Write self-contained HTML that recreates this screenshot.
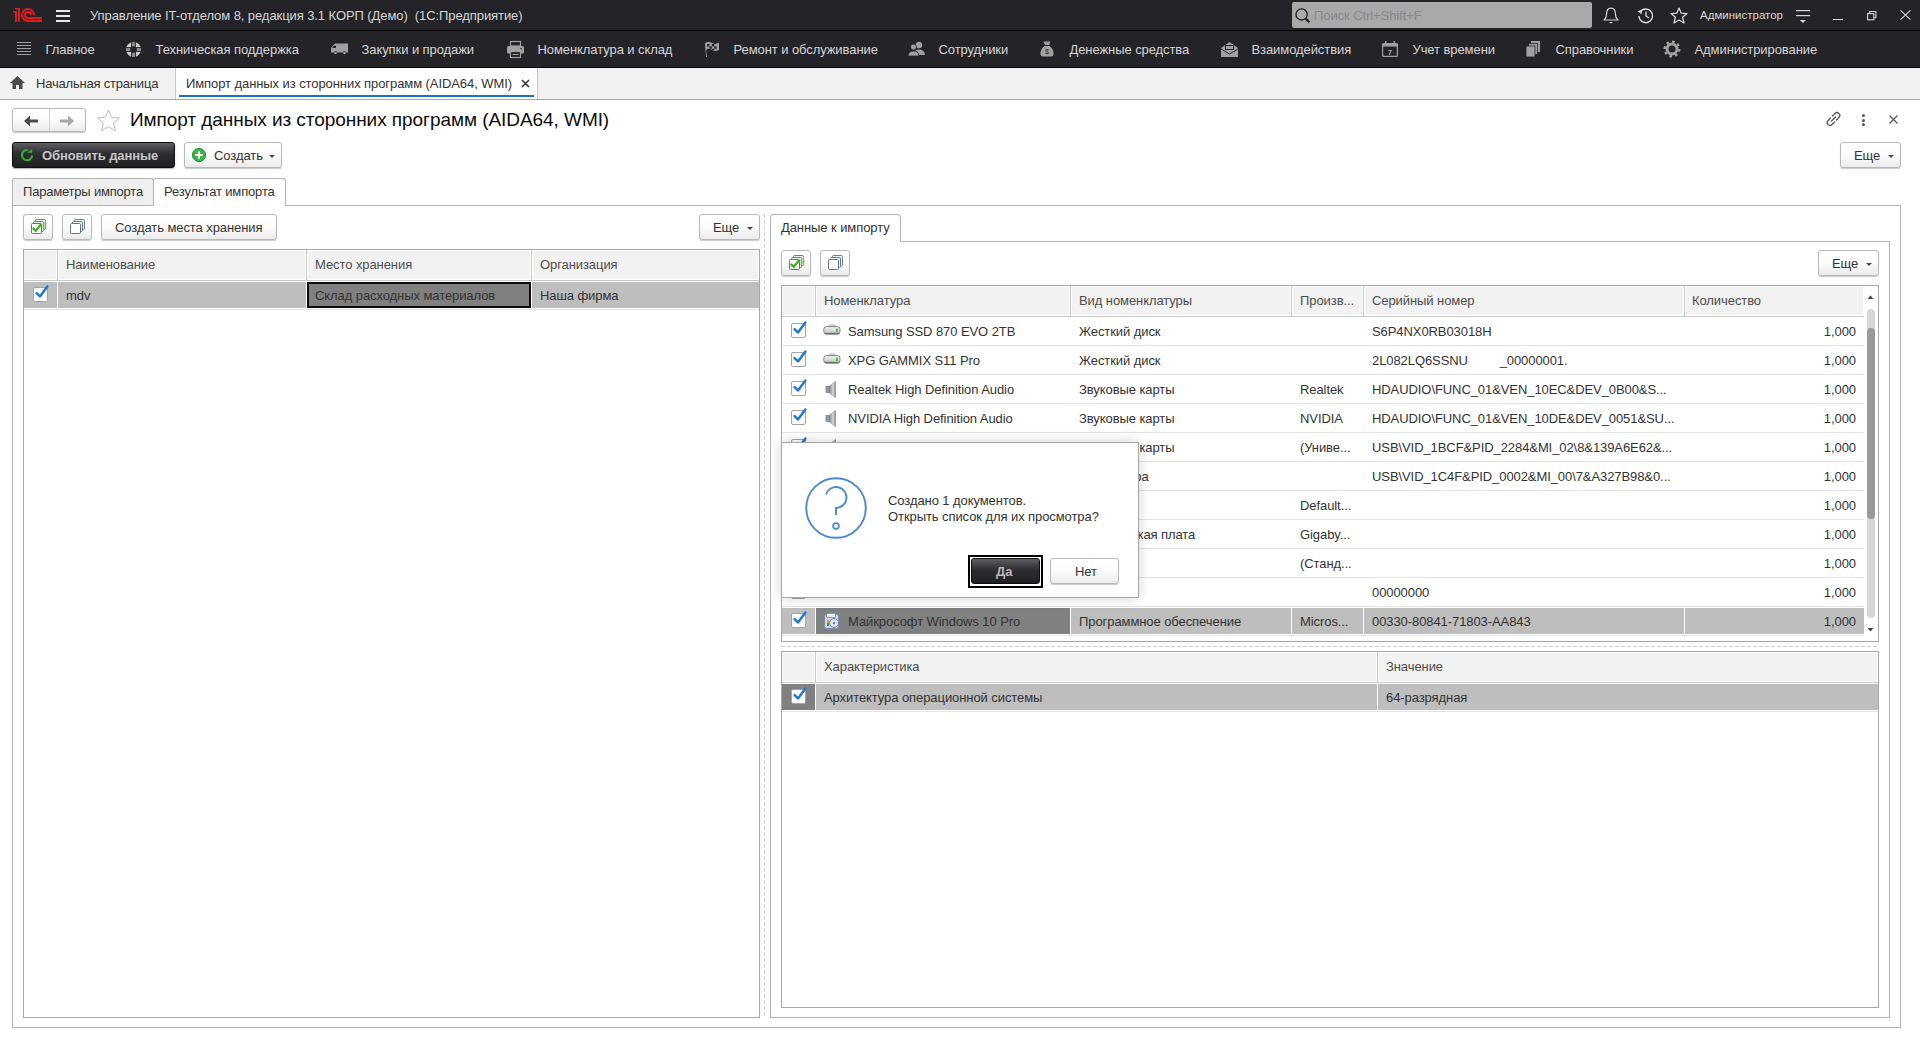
<!DOCTYPE html>
<html><head><meta charset="utf-8"><style>
*{margin:0;padding:0;box-sizing:border-box}
html,body{width:1920px;height:1040px;overflow:hidden;background:#fff;font-family:"Liberation Sans",sans-serif;font-size:13px;color:#333}
.a{position:absolute}
.t{position:absolute;white-space:pre}
svg{position:absolute;overflow:visible}
</style></head><body>
<svg style="left:0;top:0" width="0" height="0"><defs><linearGradient id="hddg" x1="0" y1="0" x2="0" y2="1"><stop offset="0" stop-color="#f6f6f6"/><stop offset="0.6" stop-color="#d4d4d4"/><stop offset="1" stop-color="#a8a8a8"/></linearGradient></defs></svg>
<div class="a" style="left:0px;top:0px;width:1920px;height:30px;background:#232328"></div>
<div class="a" style="left:0px;top:30px;width:1920px;height:1px;background:#050505"></div>
<div class="a" style="left:0px;top:31px;width:1920px;height:36px;background:#232328"></div>
<div class="a" style="left:0px;top:67px;width:1920px;height:1px;background:#050505"></div>
<div class="a" style="left:0px;top:68px;width:1920px;height:31px;background:#f2f2f2"></div>
<div class="a" style="left:0px;top:99px;width:1920px;height:1px;background:#a9a9a9"></div>
<svg style="left:0;top:0" width="50" height="30" viewBox="0 0 50 30">
<g fill="#e01b22">
<rect x="13" y="11" width="3.9" height="1.7"/><rect x="15" y="11" width="1.9" height="11"/>
<rect x="15" y="8" width="5" height="1.5"/><rect x="18" y="8" width="2" height="14"/>
</g>
<g fill="none" stroke="#e01b22" stroke-width="2">
<path d="M34 15 A6 6 0 1 0 28 21 H42"/>
<path d="M31 15 A3 3 0 1 0 28 18 H42"/>
</g></svg>
<div class="a" style="left:56px;top:10px;width:14px;height:1.5px;background:#e8e8e8"></div>
<div class="a" style="left:56px;top:15px;width:14px;height:1.5px;background:#e8e8e8"></div>
<div class="a" style="left:56px;top:20px;width:14px;height:1.5px;background:#e8e8e8"></div>
<div class="t" style="left:90px;top:8.00px;font-size:13px;line-height:15px;letter-spacing:-0.08px;color:#d6d6d6;">Управление IT-отделом 8, редакция 3.1 КОРП (Демо)  (1С:Предприятие)</div>
<div class="a" style="left:1292px;top:2px;width:300px;height:26px;background:#a9a9a9;border-radius:2px"></div>
<svg style="left:1294px;top:7px" width="18" height="18" viewBox="0 0 18 18"><circle cx="7.6" cy="7.4" r="5.6" fill="none" stroke="#1e1e1e" stroke-width="1.3"/><path d="M11.6 11.6 L15.3 15.3" stroke="#1e1e1e" stroke-width="2.3"/></svg>
<div class="t" style="left:1314px;top:8.00px;font-size:13px;line-height:15px;letter-spacing:-0.08px;color:#858890;">Поиск Ctrl+Shift+F</div>
<svg style="left:1603px;top:7px" width="16" height="17" viewBox="0 0 16 17"><path d="M8 1.2 C4.8 1.2 3.6 4 3.6 7 C3.6 10 2.8 11.5 1 13 H15 C13.2 11.5 12.4 10 12.4 7 C12.4 4 11.2 1.2 8 1.2 Z" fill="none" stroke="#d8d8d8" stroke-width="1.2" stroke-linejoin="round"/><path d="M6 15 H10 L8 16.6 Z" fill="#d8d8d8"/></svg>
<svg style="left:1637px;top:7px" width="17" height="17" viewBox="0 0 17 17"><path d="M3.2 5 A6.8 6.8 0 1 1 2 9" fill="none" stroke="#d8d8d8" stroke-width="1.4"/><path d="M0.5 4 L4.8 3 L4.5 7.5 Z" fill="#d8d8d8"/><path d="M9 4.5 V9 L12 11" fill="none" stroke="#d8d8d8" stroke-width="1.4"/></svg>
<svg style="left:1670px;top:7px" width="18" height="17" viewBox="0 0 18 17"><path d="M9 1 L11.3 6.2 L17 6.6 L12.6 10.3 L14 16 L9 13 L4 16 L5.4 10.3 L1 6.6 L6.7 6.2 Z" fill="none" stroke="#d8d8d8" stroke-width="1.3" stroke-linejoin="round"/></svg>
<div class="t" style="left:1700px;top:8.52px;font-size:11.5px;line-height:13px;color:#d6d6d6;">Администратор</div>
<svg style="left:1795px;top:9px" width="16" height="15" viewBox="0 0 16 15"><rect x="1" y="1" width="14.2" height="1.2" fill="#d8d8d8"/><rect x="1" y="6" width="14.2" height="1.2" fill="#d8d8d8"/><path d="M4.8 11 H11 L7.9 14 Z" fill="#d8d8d8"/></svg>
<div class="a" style="left:1833px;top:19px;width:10px;height:1px;background:#d8d8d8"></div>
<svg style="left:1866px;top:10px" width="11" height="11" viewBox="0 0 11 11"><rect x="1.6" y="3.6" width="6.2" height="6.2" fill="none" stroke="#d8d8d8" stroke-width="1.1"/><path d="M3.7 3.6 V1.5 H9.9 V7.7 H7.8" fill="none" stroke="#d8d8d8" stroke-width="1.1"/></svg>
<svg style="left:1900px;top:10px" width="11" height="10" viewBox="0 0 11 10"><path d="M0.5 0.3 L10.5 9.7 M10.5 0.3 L0.5 9.7" stroke="#d8d8d8" stroke-width="1.1"/></svg>
<div class="t" style="left:45.5px;top:42.00px;font-size:13px;line-height:15px;letter-spacing:-0.08px;color:#d6d6d6;">Главное</div>
<div class="t" style="left:155.5px;top:42.00px;font-size:13px;line-height:15px;letter-spacing:-0.08px;color:#d6d6d6;">Техническая поддержка</div>
<div class="t" style="left:361.5px;top:42.00px;font-size:13px;line-height:15px;letter-spacing:-0.08px;color:#d6d6d6;">Закупки и продажи</div>
<div class="t" style="left:537.5px;top:42.00px;font-size:13px;line-height:15px;letter-spacing:-0.08px;color:#d6d6d6;">Номенклатура и склад</div>
<div class="t" style="left:733.5px;top:42.00px;font-size:13px;line-height:15px;letter-spacing:-0.08px;color:#d6d6d6;">Ремонт и обслуживание</div>
<div class="t" style="left:938.5px;top:42.00px;font-size:13px;line-height:15px;letter-spacing:-0.08px;color:#d6d6d6;">Сотрудники</div>
<div class="t" style="left:1069.5px;top:42.00px;font-size:13px;line-height:15px;letter-spacing:-0.08px;color:#d6d6d6;">Денежные средства</div>
<div class="t" style="left:1251.5px;top:42.00px;font-size:13px;line-height:15px;letter-spacing:-0.08px;color:#d6d6d6;">Взаимодействия</div>
<div class="t" style="left:1412.5px;top:42.00px;font-size:13px;line-height:15px;letter-spacing:-0.08px;color:#d6d6d6;">Учет времени</div>
<div class="t" style="left:1555.5px;top:42.00px;font-size:13px;line-height:15px;letter-spacing:-0.08px;color:#d6d6d6;">Справочники</div>
<div class="t" style="left:1694.5px;top:42.00px;font-size:13px;line-height:15px;letter-spacing:-0.08px;color:#d6d6d6;">Администрирование</div>
<svg style="left:17px;top:42px" width="14" height="14" viewBox="0 0 14 14"><rect x="0" y="0" width="14" height="1" fill="#a0a0a0"/><rect x="0" y="3" width="14" height="1" fill="#a0a0a0"/><rect x="0" y="6" width="14" height="1" fill="#a0a0a0"/><rect x="0" y="9" width="14" height="1" fill="#a0a0a0"/><rect x="0" y="12" width="14" height="1" fill="#a0a0a0"/></svg>
<svg style="left:125px;top:41px" width="17" height="17" viewBox="0 0 17 17"><defs><clipPath id="lbc"><circle cx="8.5" cy="8.5" r="7.6"/></clipPath></defs><g clip-path="url(#lbc)"><g fill="#cdcdcd"><rect x="0" y="0" width="6.1" height="6.1"/><rect x="10.9" y="0" width="6.1" height="6.1"/><rect x="0" y="10.9" width="6.1" height="6.1"/><rect x="10.9" y="10.9" width="6.1" height="6.1"/></g><g fill="#8e8e8e"><rect x="7" y="0" width="3" height="5.3"/><rect x="7" y="11.8" width="3" height="5.2"/><rect x="0" y="7" width="5.2" height="3"/><rect x="11.8" y="7" width="5.2" height="3"/></g></g></svg>
<svg style="left:331px;top:43px" width="17" height="12" viewBox="0 0 17 12"><path d="M4 0.5 H17 V9.5 H15 A1.5 1.5 0 0 0 12 9.5 H6 A1.5 1.5 0 0 0 3 9.5 H0 V5 L2 2.5 Z" fill="#a0a0a0"/><path d="M1.2 5 L2.8 2.8 H5 V5 Z" fill="#232328"/><circle cx="4.5" cy="10" r="1.3" fill="#a0a0a0"/><circle cx="13.5" cy="10" r="1.3" fill="#a0a0a0"/></svg>
<svg style="left:507px;top:41px" width="17" height="17" viewBox="0 0 17 17"><rect x="3.5" y="0.5" width="10" height="4.5" fill="none" stroke="#a0a0a0" stroke-width="1.2"/><rect x="0" y="5" width="17" height="7.5" rx="1.5" fill="#a0a0a0"/><circle cx="14" cy="7.5" r="0.8" fill="#232328"/><rect x="3.5" y="10.5" width="10" height="6" fill="#232328" stroke="#a0a0a0" stroke-width="1.2"/><rect x="5.5" y="13" width="6" height="1" fill="#a0a0a0"/></svg>
<svg style="left:704px;top:41px" width="15" height="16" viewBox="0 0 15 16"><path d="M1 2 Q5 0 8 2 T15 1.5 V9 Q11 11 8 9 T2 9.5 L3 16 H2 Z" fill="#a0a0a0"/><g fill="#232328"><rect x="3" y="3" width="2.4" height="2.4"/><rect x="7.8" y="3" width="2.4" height="2.4"/><rect x="5.4" y="5.4" width="2.4" height="2.4"/><rect x="10.2" y="5.4" width="2.4" height="2.4"/><rect x="3" y="7.8" width="2.4" height="1.5"/><rect x="7.8" y="7.8" width="2.4" height="1.5"/></g></svg>
<svg style="left:908px;top:41px" width="17" height="15" viewBox="0 0 17 15"><circle cx="11" cy="4" r="3.2" fill="#a0a0a0"/><path d="M5.5 14 Q6 8.5 11 8.5 Q16.5 8.5 17 14 Z" fill="#a0a0a0"/><circle cx="5.5" cy="6" r="3" fill="#a0a0a0" stroke="#232328" stroke-width="0.8"/><path d="M0 15 Q0.5 10 5.5 10 Q10.5 10 11 15 Z" fill="#a0a0a0" stroke="#232328" stroke-width="0.8"/></svg>
<svg style="left:1040px;top:41px" width="14" height="16" viewBox="0 0 14 16"><path d="M3.5 0.5 H10.5 L9 4 H5 Z" fill="#a0a0a0"/><path d="M4.5 5 H9.5 Q14 8 13.5 13.5 Q13 15.5 11 15.5 H3 Q1 15.5 0.5 13.5 Q0 8 4.5 5 Z" fill="#a0a0a0"/><text x="7" y="13" font-size="7" text-anchor="middle" fill="#232328" font-family="Liberation Sans">$</text></svg>
<svg style="left:1221px;top:41px" width="17" height="16" viewBox="0 0 17 16"><path d="M0 7 L8.5 1 L17 7 V16 H0 Z" fill="#a0a0a0"/><rect x="4" y="4" width="9" height="5" fill="#232328"/><rect x="5" y="5" width="7" height="3" fill="#a0a0a0"/><path d="M0 8 L8.5 13 L17 8" fill="none" stroke="#232328" stroke-width="1"/></svg>
<svg style="left:1382px;top:41px" width="16" height="16" viewBox="0 0 16 16"><rect x="0.6" y="2.6" width="14.8" height="12.8" rx="1" fill="none" stroke="#a0a0a0" stroke-width="1.2"/><rect x="0.6" y="2.6" width="14.8" height="3" fill="#a0a0a0"/><rect x="3" y="0" width="1.5" height="4" fill="#a0a0a0"/><rect x="11.5" y="0" width="1.5" height="4" fill="#a0a0a0"/><text x="8" y="14" font-size="8" font-weight="bold" text-anchor="middle" fill="#a0a0a0" font-family="Liberation Sans">7</text></svg>
<svg style="left:1526px;top:41px" width="14" height="16" viewBox="0 0 14 16"><rect x="5" y="0" width="9" height="11" fill="#a0a0a0"/><rect x="2.5" y="2.5" width="9" height="11" fill="#a0a0a0" stroke="#232328" stroke-width="0.8"/><rect x="0" y="5" width="9" height="11" fill="#a0a0a0" stroke="#232328" stroke-width="0.8"/></svg>
<svg style="left:1664px;top:41px" width="16" height="16" viewBox="0 0 16 16"><circle cx="8" cy="8" r="5" fill="none" stroke="#a0a0a0" stroke-width="3"/><circle cx="8" cy="8" r="7.3" fill="none" stroke="#a0a0a0" stroke-width="2.4" stroke-dasharray="2.6 3.1"/></svg>
<svg style="left:10px;top:76px" width="15" height="13" viewBox="0 0 15 13"><path d="M7.5 0 L15 7 H12.5 V13 H9 V9 H6 V13 H2.5 V7 H0 Z" fill="#4a4a4a"/></svg>
<div class="t" style="left:36px;top:76.00px;font-size:13px;line-height:15px;color:#333;letter-spacing:-0.2px">Начальная страница</div>
<div class="a" style="left:175px;top:68px;width:1px;height:31px;background:#c8c8c8"></div>
<div class="a" style="left:176px;top:68px;width:361px;height:31px;background:#fff"></div>
<div class="a" style="left:537px;top:68px;width:1px;height:31px;background:#c8c8c8"></div>
<div class="t" style="left:186px;top:76.00px;font-size:13px;line-height:15px;letter-spacing:-0.08px;color:#333;">Импорт данных из сторонних программ (AIDA64, WMI)</div>
<div class="a" style="left:179px;top:95px;width:355px;height:2px;background:#1a73c8"></div>
<svg style="left:521px;top:79px" width="9" height="9" viewBox="0 0 9 9"><path d="M1 1 L8 8 M8 1 L1 8" stroke="#333" stroke-width="1.5"/></svg>
<div class="a" style="left:12px;top:108px;width:74px;height:24px;border:1px solid #b9b9b9;border-radius:3px;background:linear-gradient(#ffffff 0%,#fdfdfd 45%,#ebebeb 100%);box-shadow:0 1px 1px rgba(0,0,0,.22);"></div>
<div class="a" style="left:49px;top:109px;width:1px;height:22px;background:#d2d2d2"></div>
<svg style="left:24px;top:115px" width="14" height="12" viewBox="0 0 14 12"><path d="M0 6 L6 0.5 V4.5 H14 V7.5 H6 V11.5 Z" fill="#4a4a4a"/></svg>
<svg style="left:60px;top:115px" width="14" height="12" viewBox="0 0 14 12"><path d="M14 6 L8 0.5 V4.5 H0 V7.5 H8 V11.5 Z" fill="#a8a8a8"/></svg>
<svg style="left:96px;top:109px" width="25" height="23" viewBox="0 0 25 23"><path d="M12.5 1 L15.6 8.3 L23.5 8.9 L17.5 14 L19.4 21.8 L12.5 17.6 L5.6 21.8 L7.5 14 L1.5 8.9 L9.4 8.3 Z" fill="none" stroke="#b8bec6" stroke-width="1" stroke-linejoin="miter"/></svg>
<div class="t" style="left:130px;top:109.42px;font-size:19px;line-height:22px;color:#0d0d0d;letter-spacing:-0.06px">Импорт данных из сторонних программ (AIDA64, WMI)</div>
<svg style="left:1825px;top:111px" width="17" height="16" viewBox="0 0 17 16"><g fill="none" stroke="#555" stroke-width="1.3" stroke-linecap="round"><path d="M7.5 5 L10 2.5 A2.6 2.6 0 0 1 14 6.3 L11.5 9"/><path d="M9.5 11 L7 13.5 A2.6 2.6 0 0 1 3 9.7 L5.5 7"/><path d="M6.5 10 L10.5 6"/></g></svg>
<div class="a" style="left:1861.5px;top:114px;width:3px;height:3px;border-radius:50%;background:#555"></div>
<div class="a" style="left:1861.5px;top:118.5px;width:3px;height:3px;border-radius:50%;background:#555"></div>
<div class="a" style="left:1861.5px;top:123px;width:3px;height:3px;border-radius:50%;background:#555"></div>
<svg style="left:1889px;top:115px" width="9" height="9" viewBox="0 0 9 9"><path d="M0.5 0.5 L8.5 8.5 M8.5 0.5 L0.5 8.5" stroke="#555" stroke-width="1.2"/></svg>
<div class="a" style="left:12px;top:142px;width:163px;height:26px;border-radius:3px;background:linear-gradient(#5e5e62 0%,#2e2e32 45%,#202024 100%);border:1px solid #0e0e10;box-shadow:0 1px 1px rgba(0,0,0,.3)"></div>
<svg style="left:20px;top:148px" width="14" height="14" viewBox="0 0 14 14"><path d="M12.1 7.6 A5.1 5.1 0 1 1 7.6 2.1" fill="none" stroke="#32b02a" stroke-width="2.1"/><path d="M7.2 4.6 L12.2 0.9 L12.2 4.9 Z" fill="#32b02a"/></svg>
<div class="t" style="left:42px;top:148.00px;font-size:13px;line-height:15px;letter-spacing:-0.08px;color:#c6c6c6;font-weight:bold;">Обновить данные</div>
<div class="a" style="left:184px;top:142px;width:98px;height:26px;border:1px solid #b9b9b9;border-radius:3px;background:linear-gradient(#ffffff 0%,#fdfdfd 45%,#ebebeb 100%);box-shadow:0 1px 1px rgba(0,0,0,.22);"></div>
<svg style="left:191px;top:147px" width="16" height="16" viewBox="0 0 16 16"><circle cx="8" cy="8" r="6.6" fill="#3eb24c" stroke="#22973a" stroke-width="1"/><path d="M8 4.3 V11.7 M4.3 8 H11.7" stroke="#fff" stroke-width="2"/></svg>
<div class="t" style="left:214px;top:148.00px;font-size:13px;line-height:15px;letter-spacing:-0.08px;color:#333;">Создать</div>
<svg style="left:269px;top:155px" width="6" height="3" viewBox="0 0 6 3"><path d="M0 0 H6 L3 3 Z" fill="#4a4a4a"/></svg>
<div class="a" style="left:1840px;top:142px;width:61px;height:26px;border:1px solid #b9b9b9;border-radius:3px;background:linear-gradient(#ffffff 0%,#fdfdfd 45%,#ebebeb 100%);box-shadow:0 1px 1px rgba(0,0,0,.22);"></div>
<div class="t" style="left:1854px;top:148.00px;font-size:13px;line-height:15px;letter-spacing:-0.08px;color:#333;">Еще</div>
<svg style="left:1888px;top:155px" width="6" height="3" viewBox="0 0 6 3"><path d="M0 0 H6 L3 3 Z" fill="#4a4a4a"/></svg>
<div class="a" style="left:12px;top:205px;width:1889px;height:823px;border:1px solid #b4b4b4"></div>
<div class="a" style="left:12px;top:178px;width:142px;height:27px;border:1px solid #b4b4b4;border-bottom:none;border-radius:3px 3px 0 0;background:#efefef"></div>
<div class="a" style="left:153px;top:178px;width:133px;height:28px;border:1px solid #b4b4b4;border-bottom:none;border-radius:3px 3px 0 0;background:#fff"></div>
<div class="t" style="left:23px;top:184.00px;font-size:13px;line-height:15px;color:#333;letter-spacing:-0.2px">Параметры импорта</div>
<div class="t" style="left:164px;top:184.00px;font-size:13px;line-height:15px;color:#333;letter-spacing:-0.15px">Результат импорта</div>
<div class="a" style="left:23px;top:214px;width:30px;height:26px;border:1px solid #b9b9b9;border-radius:3px;background:linear-gradient(#ffffff 0%,#fdfdfd 45%,#ebebeb 100%);box-shadow:0 1px 1px rgba(0,0,0,.22);"></div>
<svg style="left:30px;top:219px" width="17" height="16" viewBox="0 0 17 16"><rect x="5.5" y="0.5" width="10" height="10" rx="1" fill="#eef4ee" stroke="#55708a" stroke-width="0.9"/><path d="M15.5 2 V9.5" stroke="#6cc050" stroke-width="1.5"/><rect x="3.5" y="2.5" width="10" height="10" rx="1" fill="#eef4ee" stroke="#55708a" stroke-width="0.9"/><path d="M13.5 4 V11.5" stroke="#6cc050" stroke-width="1.5"/><rect x="1.5" y="4.5" width="10" height="10" rx="1" fill="#fff" stroke="#4a6888" stroke-width="0.9"/><path d="M2.8 8.8 L5.8 11.8 L11.2 5.3" fill="none" stroke="#45ad2a" stroke-width="2.4"/></svg>
<div class="a" style="left:62px;top:214px;width:30px;height:26px;border:1px solid #b9b9b9;border-radius:3px;background:linear-gradient(#ffffff 0%,#fdfdfd 45%,#ebebeb 100%);box-shadow:0 1px 1px rgba(0,0,0,.22);"></div>
<svg style="left:69px;top:219px" width="17" height="16" viewBox="0 0 17 16"><rect x="5.5" y="0.5" width="10" height="10" rx="1" fill="#f2f5f8" stroke="#55708a" stroke-width="0.9"/><rect x="3.5" y="2.5" width="10" height="10" rx="1" fill="#f2f5f8" stroke="#55708a" stroke-width="0.9"/><rect x="1.5" y="4.5" width="10" height="10" rx="1" fill="#fff" stroke="#4a6888" stroke-width="0.9"/></svg>
<div class="a" style="left:101px;top:214px;width:176px;height:26px;border:1px solid #b9b9b9;border-radius:3px;background:linear-gradient(#ffffff 0%,#fdfdfd 45%,#ebebeb 100%);box-shadow:0 1px 1px rgba(0,0,0,.22);"></div>
<div class="t" style="left:115px;top:220.00px;font-size:13px;line-height:15px;letter-spacing:-0.08px;color:#333;">Создать места хранения</div>
<div class="a" style="left:699px;top:214px;width:61px;height:26px;border:1px solid #b9b9b9;border-radius:3px;background:linear-gradient(#ffffff 0%,#fdfdfd 45%,#ebebeb 100%);box-shadow:0 1px 1px rgba(0,0,0,.22);"></div>
<div class="t" style="left:713px;top:220.00px;font-size:13px;line-height:15px;letter-spacing:-0.08px;color:#333;">Еще</div>
<svg style="left:747px;top:227px" width="6" height="3" viewBox="0 0 6 3"><path d="M0 0 H6 L3 3 Z" fill="#4a4a4a"/></svg>
<div class="a" style="left:764px;top:214px;width:1px;height:802px;background:repeating-linear-gradient(#d2d2d2 0 4px,#fff 4px 6px)"></div>
<div class="a" style="left:23px;top:249px;width:737px;height:769px;border:1px solid #a8a8a8;background:#fff"></div>
<div class="a" style="left:24px;top:251px;width:32px;height:28px;background:#f2f2f2"></div>
<div class="a" style="left:59px;top:251px;width:246px;height:28px;background:#f2f2f2"></div>
<div class="a" style="left:308px;top:251px;width:222px;height:28px;background:#f2f2f2"></div>
<div class="a" style="left:533px;top:251px;width:225px;height:28px;background:#f2f2f2"></div>
<div class="a" style="left:57px;top:250px;width:1px;height:30px;background:#c9c9c9"></div>
<div class="a" style="left:306px;top:250px;width:1px;height:30px;background:#c9c9c9"></div>
<div class="a" style="left:531px;top:250px;width:1px;height:30px;background:#c9c9c9"></div>
<div class="a" style="left:24px;top:280px;width:735px;height:1px;background:#c9c9c9"></div>
<div class="t" style="left:66px;top:257.00px;font-size:13px;line-height:15px;letter-spacing:-0.08px;color:#4d4d4d;">Наименование</div>
<div class="t" style="left:315px;top:257.00px;font-size:13px;line-height:15px;letter-spacing:-0.08px;color:#4d4d4d;">Место хранения</div>
<div class="t" style="left:540px;top:257.00px;font-size:13px;line-height:15px;letter-spacing:-0.08px;color:#4d4d4d;">Организация</div>
<div class="a" style="left:24px;top:309px;width:735px;height:1px;background:#e4e4e4"></div>
<div class="a" style="left:24px;top:282px;width:33px;height:26px;background:#bebebe"></div>
<div class="a" style="left:58px;top:282px;width:248px;height:26px;background:#bebebe"></div>
<div class="a" style="left:307px;top:282px;width:224px;height:26px;background:#bebebe"></div>
<div class="a" style="left:532px;top:282px;width:227px;height:26px;background:#bebebe"></div>
<div class="a" style="left:307px;top:282px;width:224px;height:26px;background:#808080;border:2px solid #0a0a0a"></div>
<div class="a" style="left:33px;top:287px;width:15px;height:15px;background:#fff;border:1px solid #a4a4a4;border-radius:2px;box-shadow:inset 0 0 0 1px #fff"></div>
<svg style="left:34px;top:284px" width="16" height="16" viewBox="0 0 16 16"><path d="M2.6 9.2 L6 12.4 L13.4 2.6" fill="none" stroke="#1f78d1" stroke-width="2.5" stroke-linecap="round" stroke-linejoin="round"/></svg>
<div class="t" style="left:66px;top:288.00px;font-size:13px;line-height:15px;letter-spacing:-0.08px;color:#333;">mdv</div>
<div class="t" style="left:315px;top:288.00px;font-size:13px;line-height:15px;letter-spacing:-0.08px;color:#333;">Склад расходных материалов</div>
<div class="t" style="left:540px;top:288.00px;font-size:13px;line-height:15px;letter-spacing:-0.08px;color:#333;">Наша фирма</div>
<div class="a" style="left:770px;top:241px;width:1120px;height:777px;border:1px solid #b4b4b4;background:#fff"></div>
<div class="a" style="left:770px;top:214px;width:131px;height:28px;border:1px solid #b4b4b4;border-bottom:none;border-radius:4px 4px 0 0;background:#fff"></div>
<div class="t" style="left:781px;top:220.00px;font-size:13px;line-height:15px;letter-spacing:-0.08px;color:#333;">Данные к импорту</div>
<div class="a" style="left:781px;top:250px;width:30px;height:26px;border:1px solid #b9b9b9;border-radius:3px;background:linear-gradient(#ffffff 0%,#fdfdfd 45%,#ebebeb 100%);box-shadow:0 1px 1px rgba(0,0,0,.22);"></div>
<svg style="left:788px;top:255px" width="17" height="16" viewBox="0 0 17 16"><rect x="5.5" y="0.5" width="10" height="10" rx="1" fill="#eef4ee" stroke="#55708a" stroke-width="0.9"/><path d="M15.5 2 V9.5" stroke="#6cc050" stroke-width="1.5"/><rect x="3.5" y="2.5" width="10" height="10" rx="1" fill="#eef4ee" stroke="#55708a" stroke-width="0.9"/><path d="M13.5 4 V11.5" stroke="#6cc050" stroke-width="1.5"/><rect x="1.5" y="4.5" width="10" height="10" rx="1" fill="#fff" stroke="#4a6888" stroke-width="0.9"/><path d="M2.8 8.8 L5.8 11.8 L11.2 5.3" fill="none" stroke="#45ad2a" stroke-width="2.4"/></svg>
<div class="a" style="left:820px;top:250px;width:30px;height:26px;border:1px solid #b9b9b9;border-radius:3px;background:linear-gradient(#ffffff 0%,#fdfdfd 45%,#ebebeb 100%);box-shadow:0 1px 1px rgba(0,0,0,.22);"></div>
<svg style="left:827px;top:255px" width="17" height="16" viewBox="0 0 17 16"><rect x="5.5" y="0.5" width="10" height="10" rx="1" fill="#f2f5f8" stroke="#55708a" stroke-width="0.9"/><rect x="3.5" y="2.5" width="10" height="10" rx="1" fill="#f2f5f8" stroke="#55708a" stroke-width="0.9"/><rect x="1.5" y="4.5" width="10" height="10" rx="1" fill="#fff" stroke="#4a6888" stroke-width="0.9"/></svg>
<div class="a" style="left:1818px;top:250px;width:61px;height:26px;border:1px solid #b9b9b9;border-radius:3px;background:linear-gradient(#ffffff 0%,#fdfdfd 45%,#ebebeb 100%);box-shadow:0 1px 1px rgba(0,0,0,.22);"></div>
<div class="t" style="left:1832px;top:256.00px;font-size:13px;line-height:15px;letter-spacing:-0.08px;color:#333;">Еще</div>
<svg style="left:1866px;top:263px" width="6" height="3" viewBox="0 0 6 3"><path d="M0 0 H6 L3 3 Z" fill="#4a4a4a"/></svg>
<div class="a" style="left:781px;top:285px;width:1098px;height:357px;border:1px solid #a8a8a8;background:#fff"></div>
<div class="a" style="left:782px;top:287px;width:32px;height:28px;background:#f2f2f2"></div>
<div class="a" style="left:817px;top:287px;width:252px;height:28px;background:#f2f2f2"></div>
<div class="a" style="left:1072px;top:287px;width:218px;height:28px;background:#f2f2f2"></div>
<div class="a" style="left:1293px;top:287px;width:69px;height:28px;background:#f2f2f2"></div>
<div class="a" style="left:1365px;top:287px;width:318px;height:28px;background:#f2f2f2"></div>
<div class="a" style="left:1686px;top:287px;width:177px;height:28px;background:#f2f2f2"></div>
<div class="a" style="left:815px;top:286px;width:1px;height:30px;background:#c9c9c9"></div>
<div class="a" style="left:1070px;top:286px;width:1px;height:30px;background:#c9c9c9"></div>
<div class="a" style="left:1291px;top:286px;width:1px;height:30px;background:#c9c9c9"></div>
<div class="a" style="left:1363px;top:286px;width:1px;height:30px;background:#c9c9c9"></div>
<div class="a" style="left:1684px;top:286px;width:1px;height:30px;background:#c9c9c9"></div>
<div class="a" style="left:782px;top:316px;width:1082px;height:1px;background:#c9c9c9"></div>
<div class="t" style="left:824px;top:293.00px;font-size:13px;line-height:15px;letter-spacing:-0.08px;color:#4d4d4d;">Номенклатура</div>
<div class="t" style="left:1079px;top:293.00px;font-size:13px;line-height:15px;letter-spacing:-0.08px;color:#4d4d4d;">Вид номенклатуры</div>
<div class="t" style="left:1300px;top:293.00px;font-size:13px;line-height:15px;letter-spacing:-0.08px;color:#4d4d4d;">Произв...</div>
<div class="t" style="left:1372px;top:293.00px;font-size:13px;line-height:15px;letter-spacing:-0.08px;color:#4d4d4d;">Серийный номер</div>
<div class="t" style="left:1692px;top:293.00px;font-size:13px;line-height:15px;letter-spacing:-0.08px;color:#4d4d4d;">Количество</div>
<div class="a" style="left:782px;top:345px;width:1082px;height:1px;background:#e4e4e4"></div>
<div class="a" style="left:791px;top:323px;width:15px;height:15px;background:#fff;border:1px solid #a4a4a4;border-radius:2px;box-shadow:inset 0 0 0 1px #fff"></div>
<svg style="left:792px;top:320px" width="16" height="16" viewBox="0 0 16 16"><path d="M2.6 9.2 L6 12.4 L13.4 2.6" fill="none" stroke="#1f78d1" stroke-width="2.5" stroke-linecap="round" stroke-linejoin="round"/></svg>
<svg style="left:823px;top:324px" width="18" height="11" viewBox="0 0 18 11"><path d="M5 2.5 Q5.5 0.8 9 0.8 Q12.5 0.8 13 2.5 Z" fill="#e4e4e4" stroke="#9a9a9a" stroke-width="0.7"/><rect x="0.8" y="2.6" width="16.2" height="7.6" rx="2.6" fill="url(#hddg)" stroke="#7a7a7a" stroke-width="0.9"/><rect x="13" y="4.6" width="1.8" height="3.4" fill="#3fc02a"/><path d="M2 9.6 H16" stroke="#5a5a5a" stroke-width="0.8"/></svg>
<div class="t" style="left:848px;top:324.00px;font-size:13px;line-height:15px;letter-spacing:-0.08px;color:#333;">Samsung SSD 870 EVO 2TB</div>
<div class="t" style="left:1079px;top:324.00px;font-size:13px;line-height:15px;letter-spacing:-0.08px;color:#333;">Жесткий диск</div>
<div class="t" style="left:1372px;top:324.00px;font-size:13px;line-height:15px;letter-spacing:-0.08px;color:#333;">S6P4NX0RB03018H</div>
<div class="t" style="left:1856px;top:324.00px;font-size:13px;line-height:15px;letter-spacing:-0.08px;color:#333;transform:translateX(-100%)">1,000</div>
<div class="a" style="left:782px;top:374px;width:1082px;height:1px;background:#e4e4e4"></div>
<div class="a" style="left:791px;top:352px;width:15px;height:15px;background:#fff;border:1px solid #a4a4a4;border-radius:2px;box-shadow:inset 0 0 0 1px #fff"></div>
<svg style="left:792px;top:349px" width="16" height="16" viewBox="0 0 16 16"><path d="M2.6 9.2 L6 12.4 L13.4 2.6" fill="none" stroke="#1f78d1" stroke-width="2.5" stroke-linecap="round" stroke-linejoin="round"/></svg>
<svg style="left:823px;top:353px" width="18" height="11" viewBox="0 0 18 11"><path d="M5 2.5 Q5.5 0.8 9 0.8 Q12.5 0.8 13 2.5 Z" fill="#e4e4e4" stroke="#9a9a9a" stroke-width="0.7"/><rect x="0.8" y="2.6" width="16.2" height="7.6" rx="2.6" fill="url(#hddg)" stroke="#7a7a7a" stroke-width="0.9"/><rect x="13" y="4.6" width="1.8" height="3.4" fill="#3fc02a"/><path d="M2 9.6 H16" stroke="#5a5a5a" stroke-width="0.8"/></svg>
<div class="t" style="left:848px;top:353.00px;font-size:13px;line-height:15px;letter-spacing:-0.08px;color:#333;">XPG GAMMIX S11 Pro</div>
<div class="t" style="left:1079px;top:353.00px;font-size:13px;line-height:15px;letter-spacing:-0.08px;color:#333;">Жесткий диск</div>
<div class="t" style="left:1372px;top:353.00px;font-size:13px;line-height:15px;letter-spacing:-0.08px;color:#333;">2L082LQ6SSNU         _00000001.</div>
<div class="t" style="left:1856px;top:353.00px;font-size:13px;line-height:15px;letter-spacing:-0.08px;color:#333;transform:translateX(-100%)">1,000</div>
<div class="a" style="left:782px;top:403px;width:1082px;height:1px;background:#e4e4e4"></div>
<div class="a" style="left:791px;top:381px;width:15px;height:15px;background:#fff;border:1px solid #a4a4a4;border-radius:2px;box-shadow:inset 0 0 0 1px #fff"></div>
<svg style="left:792px;top:378px" width="16" height="16" viewBox="0 0 16 16"><path d="M2.6 9.2 L6 12.4 L13.4 2.6" fill="none" stroke="#1f78d1" stroke-width="2.5" stroke-linecap="round" stroke-linejoin="round"/></svg>
<svg style="left:825px;top:381px" width="12" height="17" viewBox="0 0 12 17"><defs><linearGradient id="spg2" x1="0" y1="0" x2="1" y2="0"><stop offset="0" stop-color="#7a7a7a"/><stop offset="0.6" stop-color="#d8d8d8"/><stop offset="1" stop-color="#8a8a8a"/></linearGradient></defs><rect x="1" y="5.5" width="3.2" height="6" fill="#8aa0b8" stroke="#6a6a6a" stroke-width="0.6"/><path d="M4 5.5 L10.5 0.5 V16.5 L4 11.5 Z" fill="url(#spg2)" stroke="#8a8a8a" stroke-width="0.6"/></svg>
<div class="t" style="left:848px;top:382.00px;font-size:13px;line-height:15px;letter-spacing:-0.08px;color:#333;">Realtek High Definition Audio</div>
<div class="t" style="left:1079px;top:382.00px;font-size:13px;line-height:15px;letter-spacing:-0.08px;color:#333;">Звуковые карты</div>
<div class="t" style="left:1300px;top:382.00px;font-size:13px;line-height:15px;letter-spacing:-0.08px;color:#333;">Realtek</div>
<div class="t" style="left:1372px;top:382.00px;font-size:13px;line-height:15px;letter-spacing:-0.08px;color:#333;">HDAUDIO\FUNC_01&amp;VEN_10EC&amp;DEV_0B00&amp;S...</div>
<div class="t" style="left:1856px;top:382.00px;font-size:13px;line-height:15px;letter-spacing:-0.08px;color:#333;transform:translateX(-100%)">1,000</div>
<div class="a" style="left:782px;top:432px;width:1082px;height:1px;background:#e4e4e4"></div>
<div class="a" style="left:791px;top:410px;width:15px;height:15px;background:#fff;border:1px solid #a4a4a4;border-radius:2px;box-shadow:inset 0 0 0 1px #fff"></div>
<svg style="left:792px;top:407px" width="16" height="16" viewBox="0 0 16 16"><path d="M2.6 9.2 L6 12.4 L13.4 2.6" fill="none" stroke="#1f78d1" stroke-width="2.5" stroke-linecap="round" stroke-linejoin="round"/></svg>
<svg style="left:825px;top:410px" width="12" height="17" viewBox="0 0 12 17"><defs><linearGradient id="spg3" x1="0" y1="0" x2="1" y2="0"><stop offset="0" stop-color="#7a7a7a"/><stop offset="0.6" stop-color="#d8d8d8"/><stop offset="1" stop-color="#8a8a8a"/></linearGradient></defs><rect x="1" y="5.5" width="3.2" height="6" fill="#8aa0b8" stroke="#6a6a6a" stroke-width="0.6"/><path d="M4 5.5 L10.5 0.5 V16.5 L4 11.5 Z" fill="url(#spg3)" stroke="#8a8a8a" stroke-width="0.6"/></svg>
<div class="t" style="left:848px;top:411.00px;font-size:13px;line-height:15px;letter-spacing:-0.08px;color:#333;">NVIDIA High Definition Audio</div>
<div class="t" style="left:1079px;top:411.00px;font-size:13px;line-height:15px;letter-spacing:-0.08px;color:#333;">Звуковые карты</div>
<div class="t" style="left:1300px;top:411.00px;font-size:13px;line-height:15px;letter-spacing:-0.08px;color:#333;">NVIDIA</div>
<div class="t" style="left:1372px;top:411.00px;font-size:13px;line-height:15px;letter-spacing:-0.08px;color:#333;">HDAUDIO\FUNC_01&amp;VEN_10DE&amp;DEV_0051&amp;SU...</div>
<div class="t" style="left:1856px;top:411.00px;font-size:13px;line-height:15px;letter-spacing:-0.08px;color:#333;transform:translateX(-100%)">1,000</div>
<div class="a" style="left:782px;top:461px;width:1082px;height:1px;background:#e4e4e4"></div>
<div class="a" style="left:791px;top:439px;width:15px;height:15px;background:#fff;border:1px solid #a4a4a4;border-radius:2px;box-shadow:inset 0 0 0 1px #fff"></div>
<svg style="left:792px;top:436px" width="16" height="16" viewBox="0 0 16 16"><path d="M2.6 9.2 L6 12.4 L13.4 2.6" fill="none" stroke="#1f78d1" stroke-width="2.5" stroke-linecap="round" stroke-linejoin="round"/></svg>
<svg style="left:825px;top:439px" width="12" height="17" viewBox="0 0 12 17"><defs><linearGradient id="spg4" x1="0" y1="0" x2="1" y2="0"><stop offset="0" stop-color="#7a7a7a"/><stop offset="0.6" stop-color="#d8d8d8"/><stop offset="1" stop-color="#8a8a8a"/></linearGradient></defs><rect x="1" y="5.5" width="3.2" height="6" fill="#8aa0b8" stroke="#6a6a6a" stroke-width="0.6"/><path d="M4 5.5 L10.5 0.5 V16.5 L4 11.5 Z" fill="url(#spg4)" stroke="#8a8a8a" stroke-width="0.6"/></svg>
<div class="t" style="left:1079px;top:440.00px;font-size:13px;line-height:15px;letter-spacing:-0.08px;color:#333;">Звуковые карты</div>
<div class="t" style="left:1300px;top:440.00px;font-size:13px;line-height:15px;letter-spacing:-0.08px;color:#333;">(Униве...</div>
<div class="t" style="left:1372px;top:440.00px;font-size:13px;line-height:15px;letter-spacing:-0.08px;color:#333;">USB\VID_1BCF&amp;PID_2284&amp;MI_02\8&amp;139A6E62&amp;...</div>
<div class="t" style="left:1856px;top:440.00px;font-size:13px;line-height:15px;letter-spacing:-0.08px;color:#333;transform:translateX(-100%)">1,000</div>
<div class="a" style="left:782px;top:490px;width:1082px;height:1px;background:#e4e4e4"></div>
<div class="a" style="left:791px;top:468px;width:15px;height:15px;background:#fff;border:1px solid #a4a4a4;border-radius:2px;box-shadow:inset 0 0 0 1px #fff"></div>
<svg style="left:792px;top:465px" width="16" height="16" viewBox="0 0 16 16"><path d="M2.6 9.2 L6 12.4 L13.4 2.6" fill="none" stroke="#1f78d1" stroke-width="2.5" stroke-linecap="round" stroke-linejoin="round"/></svg>
<div class="t" style="left:1079px;top:469.00px;font-size:13px;line-height:15px;letter-spacing:-0.08px;color:#333;">Клавиатура</div>
<div class="t" style="left:1372px;top:469.00px;font-size:13px;line-height:15px;letter-spacing:-0.08px;color:#333;">USB\VID_1C4F&amp;PID_0002&amp;MI_00\7&amp;A327B98&amp;0...</div>
<div class="t" style="left:1856px;top:469.00px;font-size:13px;line-height:15px;letter-spacing:-0.08px;color:#333;transform:translateX(-100%)">1,000</div>
<div class="a" style="left:782px;top:519px;width:1082px;height:1px;background:#e4e4e4"></div>
<div class="a" style="left:791px;top:497px;width:15px;height:15px;background:#fff;border:1px solid #a4a4a4;border-radius:2px;box-shadow:inset 0 0 0 1px #fff"></div>
<svg style="left:792px;top:494px" width="16" height="16" viewBox="0 0 16 16"><path d="M2.6 9.2 L6 12.4 L13.4 2.6" fill="none" stroke="#1f78d1" stroke-width="2.5" stroke-linecap="round" stroke-linejoin="round"/></svg>
<div class="t" style="left:1300px;top:498.00px;font-size:13px;line-height:15px;letter-spacing:-0.08px;color:#333;">Default...</div>
<div class="t" style="left:1856px;top:498.00px;font-size:13px;line-height:15px;letter-spacing:-0.08px;color:#333;transform:translateX(-100%)">1,000</div>
<div class="a" style="left:782px;top:548px;width:1082px;height:1px;background:#e4e4e4"></div>
<div class="a" style="left:791px;top:526px;width:15px;height:15px;background:#fff;border:1px solid #a4a4a4;border-radius:2px;box-shadow:inset 0 0 0 1px #fff"></div>
<svg style="left:792px;top:523px" width="16" height="16" viewBox="0 0 16 16"><path d="M2.6 9.2 L6 12.4 L13.4 2.6" fill="none" stroke="#1f78d1" stroke-width="2.5" stroke-linecap="round" stroke-linejoin="round"/></svg>
<div class="t" style="left:1079px;top:527.00px;font-size:13px;line-height:15px;letter-spacing:-0.08px;color:#333;">Материнская плата</div>
<div class="t" style="left:1300px;top:527.00px;font-size:13px;line-height:15px;letter-spacing:-0.08px;color:#333;">Gigaby...</div>
<div class="t" style="left:1856px;top:527.00px;font-size:13px;line-height:15px;letter-spacing:-0.08px;color:#333;transform:translateX(-100%)">1,000</div>
<div class="a" style="left:782px;top:577px;width:1082px;height:1px;background:#e4e4e4"></div>
<div class="a" style="left:791px;top:555px;width:15px;height:15px;background:#fff;border:1px solid #a4a4a4;border-radius:2px;box-shadow:inset 0 0 0 1px #fff"></div>
<svg style="left:792px;top:552px" width="16" height="16" viewBox="0 0 16 16"><path d="M2.6 9.2 L6 12.4 L13.4 2.6" fill="none" stroke="#1f78d1" stroke-width="2.5" stroke-linecap="round" stroke-linejoin="round"/></svg>
<div class="t" style="left:1300px;top:556.00px;font-size:13px;line-height:15px;letter-spacing:-0.08px;color:#333;">(Станд...</div>
<div class="t" style="left:1856px;top:556.00px;font-size:13px;line-height:15px;letter-spacing:-0.08px;color:#333;transform:translateX(-100%)">1,000</div>
<div class="a" style="left:782px;top:606px;width:1082px;height:1px;background:#e4e4e4"></div>
<div class="a" style="left:791px;top:584px;width:15px;height:15px;background:#fff;border:1px solid #a4a4a4;border-radius:2px;box-shadow:inset 0 0 0 1px #fff"></div>
<svg style="left:792px;top:581px" width="16" height="16" viewBox="0 0 16 16"><path d="M2.6 9.2 L6 12.4 L13.4 2.6" fill="none" stroke="#1f78d1" stroke-width="2.5" stroke-linecap="round" stroke-linejoin="round"/></svg>
<div class="t" style="left:1372px;top:585.00px;font-size:13px;line-height:15px;letter-spacing:-0.08px;color:#333;">00000000</div>
<div class="t" style="left:1856px;top:585.00px;font-size:13px;line-height:15px;letter-spacing:-0.08px;color:#333;transform:translateX(-100%)">1,000</div>
<div class="a" style="left:782px;top:635px;width:1082px;height:1px;background:#e4e4e4"></div>
<div class="a" style="left:782px;top:608px;width:33px;height:26px;background:#bebebe"></div>
<div class="a" style="left:816px;top:608px;width:254px;height:26px;background:#808080"></div>
<div class="a" style="left:1071px;top:608px;width:220px;height:26px;background:#bebebe"></div>
<div class="a" style="left:1292px;top:608px;width:71px;height:26px;background:#bebebe"></div>
<div class="a" style="left:1364px;top:608px;width:320px;height:26px;background:#bebebe"></div>
<div class="a" style="left:1685px;top:608px;width:179px;height:26px;background:#bebebe"></div>
<div class="a" style="left:791px;top:613px;width:15px;height:15px;background:#fff;border:1px solid #a4a4a4;border-radius:2px;box-shadow:inset 0 0 0 1px #fff"></div>
<svg style="left:792px;top:610px" width="16" height="16" viewBox="0 0 16 16"><path d="M2.6 9.2 L6 12.4 L13.4 2.6" fill="none" stroke="#1f78d1" stroke-width="2.5" stroke-linecap="round" stroke-linejoin="round"/></svg>
<svg style="left:824px;top:613px" width="17" height="16" viewBox="0 0 17 16"><rect x="0.5" y="1.5" width="14" height="14" rx="2" fill="#c9d6ea" stroke="#7a8fb5"/><rect x="2.5" y="0.5" width="9" height="4" fill="#e8eef8" stroke="#7a8fb5" stroke-width="0.8"/><circle cx="10" cy="10" r="4.5" fill="#dfe6f2" stroke="#6f86b0"/><circle cx="10" cy="10" r="1.2" fill="#6f86b0"/><rect x="3" y="7" width="2" height="3" fill="#e8a030"/><rect x="3" y="10" width="2" height="3" fill="#3aa040"/></svg>
<div class="t" style="left:848px;top:614.00px;font-size:13px;line-height:15px;letter-spacing:-0.08px;color:#333;">Майкрософт Windows 10 Pro</div>
<div class="t" style="left:1079px;top:614.00px;font-size:13px;line-height:15px;letter-spacing:-0.08px;color:#333;">Программное обеспечение</div>
<div class="t" style="left:1300px;top:614.00px;font-size:13px;line-height:15px;letter-spacing:-0.08px;color:#333;">Micros...</div>
<div class="t" style="left:1372px;top:614.00px;font-size:13px;line-height:15px;letter-spacing:-0.08px;color:#333;">00330-80841-71803-AA843</div>
<div class="t" style="left:1856px;top:614.00px;font-size:13px;line-height:15px;letter-spacing:-0.08px;color:#333;transform:translateX(-100%)">1,000</div>
<svg style="left:1866px;top:294px" width="9" height="6" viewBox="0 0 9 6"><path d="M1.5 5 L4.5 1.5 L7.5 5 Z" fill="#444"/></svg>
<svg style="left:1866px;top:627px" width="9" height="6" viewBox="0 0 9 6"><path d="M1.5 1 L4.5 4.5 L7.5 1 Z" fill="#444"/></svg>
<div class="a" style="left:1867px;top:309px;width:8px;height:309px;background:#d6d6d6;border-radius:4px"></div>
<div class="a" style="left:1867px;top:328px;width:8px;height:191px;background:#999;border-radius:4px"></div>
<div class="a" style="left:781px;top:646px;width:1098px;height:1px;background:repeating-linear-gradient(90deg,#cdcdcd 0 4px,#fff 4px 6px)"></div>
<div class="a" style="left:781px;top:651px;width:1098px;height:357px;border:1px solid #a8a8a8;background:#fff"></div>
<div class="a" style="left:782px;top:653px;width:32px;height:28px;background:#f2f2f2"></div>
<div class="a" style="left:817px;top:653px;width:559px;height:28px;background:#f2f2f2"></div>
<div class="a" style="left:1379px;top:653px;width:498px;height:28px;background:#f2f2f2"></div>
<div class="a" style="left:815px;top:652px;width:1px;height:30px;background:#c9c9c9"></div>
<div class="a" style="left:1377px;top:652px;width:1px;height:30px;background:#c9c9c9"></div>
<div class="a" style="left:782px;top:682px;width:1096px;height:1px;background:#c9c9c9"></div>
<div class="t" style="left:824px;top:659.00px;font-size:13px;line-height:15px;letter-spacing:-0.08px;color:#4d4d4d;">Характеристика</div>
<div class="t" style="left:1386px;top:659.00px;font-size:13px;line-height:15px;letter-spacing:-0.08px;color:#4d4d4d;">Значение</div>
<div class="a" style="left:782px;top:711px;width:1096px;height:1px;background:#e4e4e4"></div>
<div class="a" style="left:782px;top:684px;width:33px;height:26px;background:#808080"></div>
<div class="a" style="left:816px;top:684px;width:561px;height:26px;background:#bebebe"></div>
<div class="a" style="left:1378px;top:684px;width:500px;height:26px;background:#bebebe"></div>
<div class="a" style="left:791px;top:689px;width:15px;height:15px;background:#fff;border:1px solid #a4a4a4;border-radius:2px;box-shadow:inset 0 0 0 1px #fff"></div>
<svg style="left:792px;top:686px" width="16" height="16" viewBox="0 0 16 16"><path d="M2.6 9.2 L6 12.4 L13.4 2.6" fill="none" stroke="#1f78d1" stroke-width="2.5" stroke-linecap="round" stroke-linejoin="round"/></svg>
<div class="t" style="left:824px;top:690.00px;font-size:13px;line-height:15px;letter-spacing:-0.08px;color:#333;">Архитектура операционной системы</div>
<div class="t" style="left:1386px;top:690.00px;font-size:13px;line-height:15px;letter-spacing:-0.08px;color:#333;">64-разрядная</div>
<div class="a" style="left:781px;top:442px;width:358px;height:156px;background:#fff;border:1px solid #a8a8a8;box-shadow:0 0 12px rgba(0,0,0,.18)"></div>
<svg style="left:803px;top:475px" width="66" height="66" viewBox="0 0 66 66"><circle cx="33" cy="33" r="29.8" fill="none" stroke="#4a8ad0" stroke-width="1.9"/><path d="M23 19.4 A10.5 10.5 0 1 1 33 33 V40" fill="none" stroke="#4a8ad0" stroke-width="1.9"/><circle cx="33" cy="51" r="2.9" fill="none" stroke="#4a8ad0" stroke-width="1.7"/></svg>
<div class="t" style="left:888px;top:493.00px;font-size:13px;line-height:15px;letter-spacing:-0.08px;color:#333;">Создано 1 документов.</div>
<div class="t" style="left:888px;top:509.00px;font-size:13px;line-height:15px;letter-spacing:-0.08px;color:#333;">Открыть список для их просмотра?</div>
<div class="a" style="left:968px;top:555px;width:75px;height:33px;border:2px solid #000"></div>
<div class="a" style="left:971px;top:558px;width:69px;height:26px;border-radius:3px;background:linear-gradient(#5e5e62 0%,#2e2e32 45%,#202024 100%);border:1px solid #0e0e10"></div>
<div class="t" style="left:996px;top:564.00px;font-size:13px;line-height:15px;letter-spacing:-0.08px;color:#b8b8b8;font-weight:bold;">Да</div>
<div class="a" style="left:1050px;top:558px;width:69px;height:26px;border:1px solid #b9b9b9;border-radius:3px;background:linear-gradient(#ffffff 0%,#fdfdfd 45%,#ebebeb 100%);box-shadow:0 1px 1px rgba(0,0,0,.22);"></div>
<div class="t" style="left:1075px;top:564.00px;font-size:13px;line-height:15px;letter-spacing:-0.08px;color:#333;">Нет</div>
</body></html>
